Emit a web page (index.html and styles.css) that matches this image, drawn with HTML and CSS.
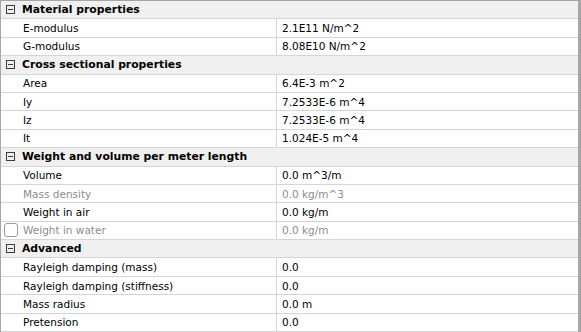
FILE: index.html
```html
<!DOCTYPE html>
<html>
<head>
<meta charset="utf-8">
<link rel="stylesheet" href="styles.css">
</head>
<body>
<div class="grid">
  <div class="cat"><span class="tog"></span><span class="cat-name">Material properties</span></div>
  <div class="row"><div class="name">E-modulus</div><div class="val">2.1E11 N/m^2</div></div>
  <div class="row"><div class="name">G-modulus</div><div class="val">8.08E10 N/m^2</div></div>
  <div class="cat"><span class="tog"></span><span class="cat-name">Cross sectional properties</span></div>
  <div class="row"><div class="name">Area</div><div class="val">6.4E-3 m^2</div></div>
  <div class="row"><div class="name">Iy</div><div class="val">7.2533E-6 m^4</div></div>
  <div class="row"><div class="name">Iz</div><div class="val">7.2533E-6 m^4</div></div>
  <div class="row"><div class="name">It</div><div class="val">1.024E-5 m^4</div></div>
  <div class="cat"><span class="tog"></span><span class="cat-name">Weight and volume per meter length</span></div>
  <div class="row"><div class="name">Volume</div><div class="val">0.0 m^3/m</div></div>
  <div class="row dis"><div class="name">Mass density</div><div class="val">0.0 kg/m^3</div></div>
  <div class="row"><div class="name">Weight in air</div><div class="val">0.0 kg/m</div></div>
  <div class="row dis"><div class="name"><span class="chk"></span>Weight in water</div><div class="val">0.0 kg/m</div></div>
  <div class="cat"><span class="tog"></span><span class="cat-name">Advanced</span></div>
  <div class="row"><div class="name">Rayleigh damping (mass)</div><div class="val">0.0</div></div>
  <div class="row"><div class="name">Rayleigh damping (stiffness)</div><div class="val">0.0</div></div>
  <div class="row"><div class="name">Mass radius</div><div class="val">0.0 m</div></div>
  <div class="row"><div class="name">Pretension</div><div class="val">0.0</div></div>
</div>
</body>
</html>
```
FILE: styles.css
```css
html, body {
  margin: 0;
  padding: 0;
  background: #ffffff;
}
.grid {
  box-sizing: border-box;
  width: 581px;
  height: 332px;
  border-left: 1px solid #a6a6a6;
  border-top: 1px solid #a6a6a6;
  border-right: 3px solid #a6a6a6;
  display: grid;
  grid-template-rows: repeat(18, 1fr);
  font-family: "DejaVu Sans", Verdana, sans-serif;
  font-size: 10.5px;
  color: #000;
}
.cat {
  background: #f0f0f0;
  border-bottom: 1px solid #d5d5d5;
  display: flex;
  align-items: center;
}
.tog {
  box-sizing: border-box;
  width: 9px;
  height: 9px;
  border: 1px solid #3c3c3c;
  margin-left: 5px;
  margin-right: 7px;
  position: relative;
}
.tog::after {
  content: "";
  position: absolute;
  left: 1px;
  right: 1px;
  top: 3px;
  height: 1px;
  background: #3c3c3c;
}
.cat-name {
  font-weight: bold;
  font-size: 10.8px;
}
.row {
  display: grid;
  grid-template-columns: 275px 1fr;
  border-bottom: 1px solid #d5d5d5;
}
.name {
  display: flex;
  align-items: center;
  padding-left: 22px;
  position: relative;
}
.val {
  display: flex;
  align-items: center;
  padding-left: 5px;
  border-left: 1px solid #d5d5d5;
}
.dis {
  color: #8c8c8c;
}
.chk {
  position: absolute;
  left: 3px;
  top: 50%;
  margin-top: -7px;
  box-sizing: border-box;
  width: 14px;
  height: 14px;
  border: 1px solid #9a9a9a;
  border-radius: 3px;
  background: #fff;
}
```
